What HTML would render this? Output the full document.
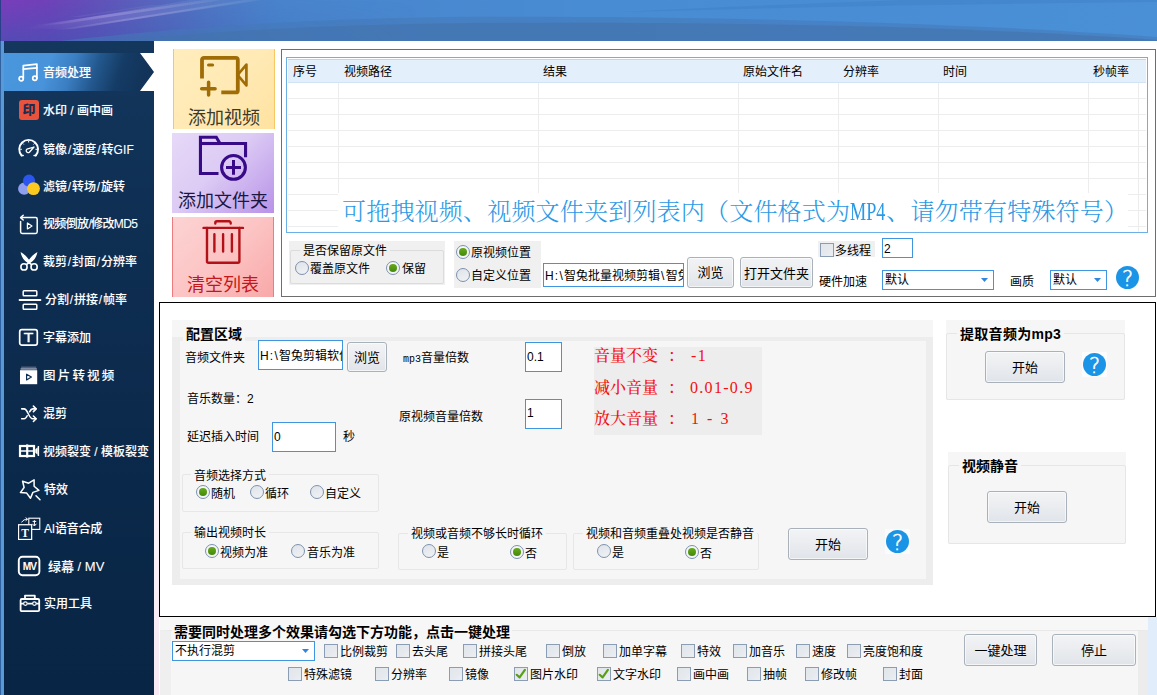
<!DOCTYPE html>
<html lang="zh-CN">
<head>
<meta charset="utf-8">
<title>智兔批量视频剪辑</title>
<style>
*{box-sizing:border-box;margin:0;padding:0}
html,body{width:1157px;height:695px;overflow:hidden;background:#fff}
body{position:relative;font-family:"Liberation Sans","Noto Sans CJK SC",sans-serif;font-size:12px;color:#000;line-height:14px}
.abs,#app *{position:absolute}
#app{position:absolute;left:0;top:0;width:1157px;height:695px;overflow:hidden}
#hdr{left:0;top:0;width:1157px;height:41px;background:linear-gradient(90deg,#6a3fb5 0%,#5a55b5 18%,#4a72b8 35%,#4380c0 55%,#4487c8 100%)}
#side{left:0;top:41px;width:154px;height:654px;background:linear-gradient(180deg,#14375d 0%,#0e2e52 30%,#0a2849 70%,#092545 100%)}
#sideL{left:0;top:41px;width:4px;height:654px;background:#5a99d6;border-left:1px solid #2f62a0}
.nav{left:4px;width:150px;height:38px;color:#fff;font-weight:bold;font-size:12px;line-height:38px;white-space:nowrap}
.nav span{left:39px;top:0}
.nav svg{left:14px;top:8px}
.t{white-space:nowrap;line-height:16px}
.sl{position:static!important;font-weight:inherit;margin:0 .8px}

#act{left:4px;top:53px;width:150px;height:38px;background:linear-gradient(108deg,#4a97de 0%,#4893da 30%,#3b7ec2 45%,#23588e 60%,#153c66 75%,#12345a 90%)}
#actw{left:140px;top:53px;width:14px;height:38px;background:#fff;clip-path:polygon(0 0,100% 0,100% 100%,0 100%,100% 50%)}
.nv{color:#fff;font-weight:500;font-size:12px;line-height:14px;white-space:nowrap;text-shadow:0 0 1px rgba(255,255,255,.25)}

.bb{width:102px;height:80px}
#b1{left:173px;top:49px;background:linear-gradient(135deg,#ffedbc 0%,#ffeab5 50%,#ffe2a0 100%);border-left:1px solid #f6c765;border-right:1px solid #f6c765}
#b2{left:172px;top:133px;background:linear-gradient(135deg,#e6d9f8 0%,#dccbf4 45%,#b892e8 100%)}
#b3{left:172px;top:217px;background:linear-gradient(135deg,#fdd3d3 0%,#fcc4c4 50%,#f9a8a8 100%);border-left:1px solid #ef7c7c;border-right:1px solid #ef7c7c}
.bt{font-size:18px;line-height:20px;text-align:center;white-space:nowrap}
#tp{left:281px;top:49px;width:875px;height:248px;border:1px solid #6e6e6e;background:#fff}
#lv{left:286px;top:57px;width:862px;height:176px;border:1px solid #6bb0e6;background:#fff}
#lvh{left:288px;top:59px;width:858px;height:24px;background:#e4effc;border-bottom:1px solid #d3e3f6;border-top:1px solid #b9d6f2}
#grid{left:288px;top:83px;width:858px;height:149px;
background-image:linear-gradient(#ededed,#ededed),linear-gradient(#ededed,#ededed),linear-gradient(#ededed,#ededed),linear-gradient(#ededed,#ededed),linear-gradient(#ededed,#ededed),linear-gradient(#ededed,#ededed),linear-gradient(#ededed,#ededed),repeating-linear-gradient(180deg,transparent 0,transparent 15px,#ededed 15px,#ededed 16px);
background-size:1px 100%,1px 100%,1px 100%,1px 100%,1px 100%,1px 100%,1px 100%,100% 16px;
background-position:50px 0,250px 0,450px 0,550px 0,650px 0,800px 0,850px 0,0 0;background-repeat:no-repeat,no-repeat,no-repeat,no-repeat,no-repeat,no-repeat,no-repeat,repeat-y}
#drag{left:338px;top:193px;width:790px;height:39px;background:#fff;font-family:"Liberation Serif","Noto Serif CJK SC",serif;font-weight:300;font-size:24px;line-height:38px;color:#2b9ae6;padding-left:4px;letter-spacing:.2px}
.mp4{position:static!important;display:inline-block;width:36px;font-size:26px;line-height:20px;font-weight:normal;transform:scaleX(.7);transform-origin:0 50%;letter-spacing:0}
.gb{background:#f0f0f0}
.gbl{border:1px solid #dcdcdc;border-radius:2px}
.gt{background:#f0f0f0}
.rd{width:14px;height:14px;border-radius:50%;border:1px solid #7c92ae;background:linear-gradient(160deg,#dfe4ea 0%,#e9ecf0 60%,#f1f3f5 100%)}
.rd.on{background:#f4f6f8}
.rd.on::after{content:"";position:absolute;left:2px;top:2px;width:8px;height:8px;border-radius:50%;background:linear-gradient(180deg,#66a81a 0%,#559a12 50%,#46860e 100%)}
.cb{width:14px;height:14px;border:1px solid #8a9db4;background:linear-gradient(135deg,#e1e6eb 0%,#e6eaee 60%,#eceff2 100%)}
.inp{border:1px solid #4095e0;background:#fff;white-space:nowrap;overflow:hidden;padding-left:1px}
.num{position:static!important;font-family:"Liberation Sans",sans-serif;font-size:12px}
.mono{position:static!important;font-family:"Liberation Mono",monospace;font-size:10px;letter-spacing:0}
.btn{border:1px solid #a9b1bb;border-radius:3px;background:linear-gradient(180deg,#f2f3f5 0%,#ebedf0 45%,#e0e4e9 100%);text-align:center;font-size:13px;white-space:nowrap;box-shadow:inset 0 0 0 1px rgba(255,255,255,.6)}
.arr{right:5px;top:7px;width:7px;height:4px;background:#2f86de;clip-path:polygon(0 0,100% 0,50% 100%)}
.help{width:23px;height:23px;border-radius:50%;background:#1a94e6;color:#fff;font-family:"DejaVu Sans Light","DejaVu Sans",sans-serif;font-weight:200;font-size:21px;line-height:26px;text-align:center;-webkit-text-stroke:.55px #fff;overflow:hidden}

#cp{left:159px;top:302px;width:997px;height:315px;border:1px solid #000;background:#fff}
#cg{left:172px;top:320px;width:761px;height:265px;background:#f6f6f6}
#cgi{left:172px;top:337px;width:761px;height:248px;border:8px solid #ededed;border-top-width:4px;border-bottom-width:6px;border-right-width:7px;background:#f6f6f6}
.bold14{font-weight:bold;font-size:14px;line-height:16px}
.redbg{left:594px;top:347px;width:168px;height:88px;background:#ededed}
.red{font-family:"Liberation Serif","Noto Serif CJK SC",serif;font-size:16px;line-height:20px;color:#f21010;font-weight:500}
.rn{letter-spacing:1.3px;word-spacing:1.5px}
.g2{border-color:#e7e7e7;background:#f6f6f6}
.gt2{background:#f6f6f6;padding:0 3px}
#bot{left:160px;top:617px;width:997px;height:78px;background:#f7f7f7}
#botg{left:160px;top:630px;width:988px;height:65px;background:#f6f6f6;border-top:1px solid #e8e8e8;border-left:11px solid #efefef;border-right:10px solid #ececec}
#pink{left:154px;top:400px;width:5px;height:295px;background:linear-gradient(180deg,rgba(250,236,247,0) 0%,#faeef7 60%,#f8e9f5 100%)}
#botr{left:1148px;top:617px;width:9px;height:78px;background:#e2edfc}
</style>
</head>
<body>
<div id="app">
<div id="hdr"><svg width="1157" height="41" viewBox="0 0 1157 41" style="left:0;top:0">
<defs>
<linearGradient id="hg" x1="0" y1="0" x2="1" y2="0"><stop offset="0" stop-color="#7a3dbb"/><stop offset=".04" stop-color="#7041b9"/><stop offset=".08" stop-color="#6350b9"/><stop offset=".13" stop-color="#5865bd"/><stop offset=".18" stop-color="#4f76c4"/><stop offset=".24" stop-color="#4984cc"/><stop offset=".5" stop-color="#488cd3"/><stop offset="1" stop-color="#4a90d6"/></linearGradient>
<linearGradient id="hv" x1="0" y1="0" x2="0" y2="1"><stop offset="0" stop-color="#3058b0" stop-opacity="0"/><stop offset="1" stop-color="#3058b0" stop-opacity=".5"/></linearGradient>
<linearGradient id="st" x1="0" y1="1" x2="1" y2="0"><stop offset="0" stop-color="#fff" stop-opacity="0"/><stop offset=".4" stop-color="#d8c8ff" stop-opacity=".28"/><stop offset="1" stop-color="#fff" stop-opacity=".05"/></linearGradient>
<linearGradient id="hmg" x1="0" y1="0" x2="1" y2="0"><stop offset="0" stop-color="#fff"/><stop offset="1" stop-color="#000"/></linearGradient><mask id="hm" maskUnits="userSpaceOnUse" x="0" y="0" width="420" height="41"><rect width="420" height="41" fill="url(#hmg)"/></mask>
</defs>
<rect width="1157" height="41" fill="url(#hg)"/>
<rect width="420" height="41" fill="url(#hv)" mask="url(#hm)"/>
<path d="M60 41C180 28 300 19 450 17C650 16 900 19 1157 37V41Z" fill="#4678b8" opacity=".55"/><path d="M110 41C230 30 330 25 470 23C680 22 930 24 1157 40V41Z" fill="#4373ac" opacity=".6"/>

<path d="M620 12C800 7 980 4 1157 2V0H900C800 4 700 8 620 12Z" fill="#3f7fc6" opacity=".45"/>
<path d="M20 29L190 0H255L75 29Z" fill="url(#st)" opacity=".55"/>
<path d="M30 26L205 0H222L62 24Z" fill="url(#st)"/>
<path d="M48 31L150 15L245 0H262L72 29Z" fill="url(#st)" opacity=".9"/>
<path d="M70 17L150 5L160 5L80 17Z" fill="#fff" opacity=".05"/>
<rect width="1" height="41" fill="#2a3f8a"/>
</svg></div>
<div id="side"></div>
<div id="sideL"></div>
<div id="act"></div>
<div id="actw"></div>
<!-- nav items -->
<div class="nv" style="top:66px;left:43px">音频处理</div>
<svg style="left:17px;top:61px" width="24" height="24" viewBox="0 0 24 24" fill="none" stroke="#fff" stroke-width="1.7" stroke-linejoin="round" stroke-linecap="round"><path d="M6.3 17.3V4.6l13.6-1.4v14"/><path d="M6.3 8.1l13.6-1.3"/><circle cx="4.2" cy="17.7" r="2.1"/><circle cx="17.8" cy="17.2" r="2.1"/></svg>

<div class="nv" style="top:104px;left:43px">水印 / 画中画</div>
<div style="left:19px;top:100px;width:20px;height:20px;border-radius:3px;background:#e9523c"></div>
<div class="t" style="left:22px;top:101px;width:14px;font-size:13px;line-height:18px;font-weight:900;color:#1b2b52;text-align:center">印</div>

<div class="nv" style="top:143px;left:43px;letter-spacing:.1px">镜像<b class="sl">/</b>速度<b class="sl">/</b>转GIF</div>
<svg style="left:17px;top:137px" width="24" height="24" viewBox="0 0 24 24" fill="none" stroke="#fff" stroke-width="1.900" stroke-linecap="round"><path d="M4.58 18.500A9.4 9.4 0 1 1 18.72 18.500"/><path d="M4.58 18.500h1.600M18.72 18.500h-1.600" stroke-width="1.600"/><path d="M3.15 12.30L4.85 12.30M5.64 6.29L6.84 7.49M11.65 3.80L11.65 5.50M17.66 6.29L16.46 7.49M20.15 12.30L18.45 12.30" stroke-width="1" stroke-linecap="butt"/><path d="M17 10L9.900 12.200A1.900 1.900 0 1 0 12.400 15.200Z" stroke-width="1.300" stroke-linejoin="round"/></svg>

<div class="nv" style="top:180px;left:43px">滤镜<b class="sl">/</b>转场<b class="sl">/</b>旋转</div>
<svg style="left:17px;top:173px" width="24" height="24" viewBox="0 0 24 24"><circle cx="7.200" cy="15.700" r="6.100" fill="#8f9ff0"/><circle cx="12" cy="7.700" r="6.100" fill="#2b56f0"/><circle cx="16.500" cy="15.600" r="6.400" fill="#fcc91f"/></svg>

<div class="nv" style="top:217px;left:43px;letter-spacing:-.65px">视频倒放/修改MD5</div>
<svg style="left:17px;top:211.500px" width="24" height="24" viewBox="0 0 24 24" fill="none" stroke="#fff" stroke-width="1.500" stroke-linecap="round" stroke-linejoin="round"><path d="M5 5.600h13.600a1.600 1.600 0 0 1 1.600 1.600v12.600a1.600 1.600 0 0 1-1.600 1.600H5.200a1.600 1.600 0 0 1-1.600-1.600V9.500"/><path d="M6.200 3.200L3.600 5.600l2.600 2.400"/><path d="M10.400 11v6l4.600-3z" stroke-width="1.200"/></svg>

<div class="nv" style="top:255px;left:43px;">裁剪<b class="sl">/</b>封面<b class="sl">/</b>分辨率</div>
<svg style="left:17px;top:249px" width="24" height="24" viewBox="0 0 24 24" fill="none" stroke="#fff" stroke-width="1.600"><circle cx="7" cy="17.900" r="3.100"/><circle cx="17.100" cy="17.900" r="3.100"/><path d="M3.600 3c.6 4.400 3 8.400 6.800 10.700l1.600 1.200 1.600-1.200c3.800-2.300 6.200-6.300 6.800-10.700-3 1.600-6.300 4.600-8.400 7.800-2.100-3.200-5.400-6.200-8.400-7.800z" fill="#fff" stroke="none"/><path d="M12 13.600l-2.600 2M12 13.600l2.600 2" stroke-width="1.800"/></svg>

<div class="nv" style="top:293px;left:45px;">分割<b class="sl">/</b>拼接<b class="sl">/</b>帧率</div>
<svg style="left:18px;top:288px" width="24" height="24" viewBox="0 0 24 24" fill="none" stroke="#fff" stroke-width="1.500"><rect x="5.200" y="2.800" width="13.600" height="5" rx=".8"/><rect x="5.200" y="16.200" width="13.600" height="5" rx=".8"/><path d="M1.600 12h20.800" stroke-linecap="round" stroke-width="2"/></svg>

<div class="nv" style="top:331px;left:43px">字幕添加</div>
<svg style="left:17px;top:326px" width="24" height="24" viewBox="0 0 24 24" fill="none" stroke="#fff" stroke-width="1.500" stroke-linecap="round"><rect x="2.700" y="3.700" width="17.600" height="15.400" rx="2.200" stroke-width="1.700"/><text x="11.500" y="16" font-family="Liberation Sans,sans-serif" font-size="12.500" fill="#fff" stroke="#fff" stroke-width=".35" text-anchor="middle" transform="translate(11.500 0) scale(1.250 1) translate(-11.500 0)">T</text></svg>

<div class="nv" style="top:369px;left:43px;letter-spacing:2.200px;font-size:12.500px">图片转视频</div>
<svg style="left:17px;top:364px" width="24" height="24" viewBox="0 0 24 24"><rect x="4.200" y="2.600" width="15" height="1.200" fill="#5f6f86"/><rect x="3.600" y="4.200" width="16.200" height="1.500" fill="#98a4b6"/><rect x="3" y="6.200" width="17.200" height="14" fill="#fff"/><path d="M9.600 10.200v5.800l4.800-2.900z" fill="none" stroke="#0d2f54" stroke-width="1.200" stroke-linejoin="round"/></svg>

<div class="nv" style="top:407px;left:43px">混剪</div>
<svg style="left:18px;top:403px" width="22" height="22" viewBox="0 0 24 24" fill="none" stroke="#fff" stroke-width="1.700" stroke-linecap="round" stroke-linejoin="round"><path d="M4 6.400h2.600c4.200 0 5 10.800 9.400 10.800h3.600"/><path d="M4 17.200h2.600c1.600 0 2.600-1.500 3.400-3.300M12.600 9.600c.9-1.800 1.900-3.200 3.600-3.200h3.400"/><path d="M16.800 3.400l3 3-3 3M16.800 14.200l3 3-3 3"/></svg>

<div class="nv" style="top:445px;left:43px;">视频裂变 / 模板裂变</div>
<svg style="left:17px;top:439px" width="24" height="24" viewBox="0 0 24 24" fill="none" stroke="#fff"><rect x="3" y="7" width="14" height="10" stroke-width="2.200"/><path d="M10.200 5.400v13.200" stroke-width="2.200"/><path d="M3 12h14" stroke-width="1.500"/><path d="M18.300 10.200l2.400-1.900v7.400l-2.400-1.900z" fill="#fff" stroke="none"/><path d="M21.400 7v10" stroke-width="1.400"/></svg>

<div class="nv" style="top:483px;left:44px">特效</div>
<svg style="left:17px;top:476px" width="26" height="26" viewBox="0 0 26 26" fill="none" stroke="#fff" stroke-width="1.500" stroke-linejoin="round" stroke-linecap="round"><path d="M17.1 3.9L17.1 10.3L21.9 14.4L15.9 16.4L13.5 22.2L9.7 17.1L3.4 16.6L7.1 11.5L5.6 5.3L11.7 7.2Z"/><path d="M19 19.800l4 4"/></svg>

<div class="nv" style="top:522px;left:44px;letter-spacing:-.2px">AI语音合成</div>
<svg style="left:17px;top:516px" width="26" height="26" viewBox="0 0 26 26" fill="none" stroke="#fff" stroke-width="1.100"><rect x="1.600" y="8.800" width="13" height="14.600" fill="#0b2a4d"/><rect x="11.800" y="2.200" width="11" height="11.200"/><rect x="1.600" y="8.800" width="13" height="14.600" fill="#0b2a4d"/><text x="8.100" y="20.800" font-family="Liberation Serif,serif" font-weight="bold" font-size="11.500" fill="#fff" stroke="none" text-anchor="middle">T</text><path d="M17.400 4.200v5.600M15.400 7.800l2 2.200 2-2.200M15.600 5.400h3.600" stroke-width="1"/><path d="M4.600 6.400c1.400-2.400 3.600-3.200 5.800-3.200M8.600 1.600l2 1.600-2 1.600" stroke-width="1"/></svg>

<div class="nv" style="top:560px;left:48px;font-size:13px">绿幕 / MV</div>
<svg style="left:17px;top:554px" width="26" height="26" viewBox="0 0 26 26" fill="none" stroke="#fff" stroke-width="1.900" stroke-linejoin="round" stroke-linecap="round"><rect x="1.800" y="2.800" width="20.600" height="18.400" rx="3.600"/><text x="12.500" y="15.700" font-family="Liberation Sans,sans-serif" font-weight="bold" font-size="10.200" fill="#fff" stroke="none" text-anchor="middle" letter-spacing="-1">MV</text></svg>

<div class="nv" style="top:597px;left:44px">实用工具</div>
<svg style="left:17px;top:592px" width="26" height="26" viewBox="0 0 26 26" fill="none" stroke="#fff" stroke-width="1.800" stroke-linejoin="round"><rect x="3.600" y="7" width="18.600" height="12.200" rx="1.200"/><path d="M8 7V3.600h9.800V7M3.600 11.600h3M10.400 11.600h5M19.200 11.600h3"/><circle cx="8.400" cy="11.600" r="1.800" stroke-width="1.200"/><circle cx="17.400" cy="11.600" r="1.800" stroke-width="1.200"/></svg>


<!-- big buttons -->
<div id="b1" class="bb"></div>
<svg style="left:198px;top:51px" width="52" height="50" viewBox="0 0 52 50" fill="none" stroke="#a06c06" stroke-width="3.800" stroke-linejoin="round"><path d="M4 27.600V8.800a2 2 0 0 1 2-2H37.800a2 2 0 0 1 2 2V39.400a2 2 0 0 1-2 2H23.300"/><path d="M48.400 13.600L39.600 24L48.400 34.400Z" stroke-width="2.700" stroke-linejoin="round"/><path d="M10.500 13.900H14.600" stroke-width="3" stroke-linecap="round"/><path d="M3.700 37.800H17.100M10.600 31.300V43.900" stroke-width="3.500" stroke-linecap="round"/></svg>
<div class="bt" style="left:173px;top:108px;width:102px;color:#3b3a2c">添加视频</div>
<div id="b2" class="bb"></div>
<svg style="left:197px;top:134px" width="54" height="50" viewBox="0 0 54 50" fill="none" stroke="#380a88" stroke-width="3.100" stroke-linejoin="miter"><path d="M21.500 39.550H3.450V3.300H19.300L23 9.500H48.550V23.300"/><path d="M3.450 9.500H23"/><circle cx="36.500" cy="33.400" r="11.900"/><path d="M29 33.400H44M36.500 26.100V40.700" stroke-width="3"/></svg>
<div class="bt" style="left:172px;top:191px;width:102px;color:#1b1740">添加文件夹</div>
<div id="b3" class="bb"></div>
<svg style="left:199px;top:218px" width="48" height="48" viewBox="0 0 48 48" fill="none" stroke="#b21217" stroke-width="2.400" stroke-linecap="round" stroke-linejoin="round"><path d="M4.500 9.900H44"/><path d="M16.300 5.500V4.900a1.600 1.600 0 0 1 1.600-1.600H30.100a1.600 1.600 0 0 1 1.600 1.600V5.500"/><path d="M8 9.900V43.200a1.500 1.500 0 0 0 1.500 1.500H38.900a1.500 1.500 0 0 0 1.500-1.500V9.900"/><path d="M15.400 16.200V33.600M24.100 16.200V33.600M32.900 16.200V33.600"/></svg>
<div class="bt" style="left:172px;top:275px;width:102px;color:#c3171c">清空列表</div>

<!-- top panel -->
<div id="tp"></div>
<div id="lv"></div>
<div id="lvh"></div>
<div id="grid"></div>
<div class="t" style="left:293px;top:64px">序号</div>
<div class="t" style="left:344px;top:64px">视频路径</div>
<div class="t" style="left:543px;top:64px">结果</div>
<div class="t" style="left:743px;top:64px">原始文件名</div>
<div class="t" style="left:843px;top:64px">分辨率</div>
<div class="t" style="left:943px;top:64px">时间</div>
<div class="t" style="left:1093px;top:64px">秒帧率</div>
<div id="drag" class="t">可拖拽视频、视频文件夹到列表内（文件格式为<b class="mp4">MP4</b>、请勿带有特殊符号）</div>

<div class="gb" style="left:289px;top:241px;width:156px;height:44px"></div>
<div class="gbl" style="left:290px;top:250px;width:154px;height:34px"></div>
<div class="t gt" style="left:300px;top:243px;padding:0 3px">是否保留原文件</div>
<div class="rd" style="left:295px;top:261px"></div><div class="t" style="left:310px;top:261px">覆盖原文件</div>
<div class="rd on" style="left:386px;top:261px"></div><div class="t" style="left:402px;top:261px">保留</div>

<div class="gb" style="left:454px;top:241px;width:87px;height:47px"></div>
<div class="rd on" style="left:456px;top:245px"></div><div class="t" style="left:471px;top:245px">原视频位置</div>
<div class="rd" style="left:456px;top:268px"></div><div class="t" style="left:471px;top:268px">自定义位置</div>

<div class="inp" style="left:543px;top:263px;width:141px;height:24px;line-height:24px"><span class="num" style="letter-spacing:1.2px">H:\</span>智兔批量视频剪辑<span class="num" style="letter-spacing:1.5px;margin-left:1px">\</span>智兔</div>
<div class="btn" style="left:687px;top:257px;width:47px;height:31px;line-height:30px">浏览</div>
<div class="btn" style="left:740px;top:257px;width:73px;height:31px;line-height:31px">打开文件夹</div>

<div class="gb" style="left:818px;top:241px;width:57px;height:16px"></div>
<div class="cb" style="left:820px;top:243px"></div><div class="t" style="left:835px;top:243px">多线程</div>
<div class="inp" style="left:882px;top:238px;width:31px;height:20px;line-height:21px;padding-left:1px"><span class="num">2</span></div>
<div class="t" style="left:819px;top:274px">硬件加速</div>
<div class="inp" style="left:882px;top:270px;width:112px;height:20px;line-height:19px;padding-left:2px">默认<i class="arr"></i></div>
<div class="t" style="left:1010px;top:274px">画质</div>
<div class="inp" style="left:1050px;top:270px;width:57px;height:20px;line-height:19px;padding-left:2px">默认<i class="arr"></i></div>
<div class="help" style="left:1116px;top:266px">?</div>

<!-- config panel -->
<div id="cp"></div>
<div id="cg"></div>
<div id="cgi"></div>
<div class="t bold14" style="left:183px;top:326px;padding:0 3px;background:#f6f6f6">配置区域</div>
<div class="t" style="left:185px;top:350px">音频文件夹</div>
<div class="inp" style="left:258px;top:340px;width:85px;height:30px;line-height:31px"><span class="num" style="letter-spacing:1.2px">H:\</span>智兔剪辑软件</div>
<div class="btn" style="left:347px;top:342px;width:40px;height:30px;line-height:30px">浏览</div>
<div class="t" style="left:403px;top:350px"><span class="mono">mp3</span>音量倍数</div>
<div class="inp" style="left:525px;top:342px;width:37px;height:30px;line-height:28px"><span class="num">0.1</span></div>
<div class="t" style="left:187px;top:391px">音乐数量：<span class="num">2</span></div>
<div class="t" style="left:399px;top:409px">原视频音量倍数</div>
<div class="inp" style="left:525px;top:399px;width:37px;height:30px;line-height:26px"><span class="num">1</span></div>
<div class="t" style="left:187px;top:429px">延迟插入时间</div>
<div class="inp" style="left:272px;top:422px;width:64px;height:30px;line-height:28px"><span class="num">0</span></div>
<div class="t" style="left:343px;top:429px">秒</div>

<div class="redbg"></div>
<div class="t red" style="left:594px;top:346px">音量不变</div><div class="t red" style="left:668px;top:346px">：</div><div class="t red rn" style="left:691px;top:346px">-1</div>
<div class="t red" style="left:594px;top:378px">减小音量</div><div class="t red" style="left:668px;top:378px">：</div><div class="t red rn" style="left:690px;top:378px">0.01-0.9</div>
<div class="t red" style="left:594px;top:409px">放大音量</div><div class="t red" style="left:668px;top:409px">：</div><div class="t red rn" style="left:691px;top:409px">1 - 3</div>

<div class="gbl g2" style="left:182px;top:474px;width:197px;height:38px"></div>
<div class="t gt2" style="left:191px;top:468px">音频选择方式</div>
<div class="rd on" style="left:196px;top:485px"></div><div class="t" style="left:211px;top:486px">随机</div>
<div class="rd" style="left:250px;top:485px"></div><div class="t" style="left:265px;top:486px">循环</div>
<div class="rd" style="left:310px;top:485px"></div><div class="t" style="left:325px;top:486px">自定义</div>

<div class="gbl g2" style="left:182px;top:532px;width:197px;height:37px"></div>
<div class="t gt2" style="left:191px;top:525px">输出视频时长</div>
<div class="rd on" style="left:205px;top:544px"></div><div class="t" style="left:220px;top:545px">视频为准</div>
<div class="rd" style="left:291px;top:544px"></div><div class="t" style="left:307px;top:545px">音乐为准</div>

<div class="gbl g2" style="left:398px;top:533px;width:169px;height:37px"></div>
<div class="t gt2" style="left:408px;top:526px">视频或音频不够长时循环</div>
<div class="rd" style="left:422px;top:544px"></div><div class="t" style="left:437px;top:545px">是</div>
<div class="rd on" style="left:510px;top:545px"></div><div class="t" style="left:525px;top:546px">否</div>

<div class="gbl g2" style="left:573px;top:533px;width:186px;height:37px"></div>
<div class="t gt2" style="left:583px;top:526px">视频和音频重叠处视频是否静音</div>
<div class="rd" style="left:597px;top:544px"></div><div class="t" style="left:612px;top:545px">是</div>
<div class="rd on" style="left:685px;top:545px"></div><div class="t" style="left:700px;top:546px">否</div>

<div class="btn" style="left:788px;top:528px;width:80px;height:32px;line-height:32px">开始</div>
<div style="left:885px;top:529px;width:25px;height:25px;background:#fbfbfb"></div><div class="help" style="left:886px;top:530px">?</div>

<div class="gb" style="left:946px;top:320px;width:179px;height:80px;background:#f6f6f6"></div>
<div class="gbl" style="left:946px;top:333px;width:179px;height:67px;border-color:#e6e6e6"></div>
<div class="t bold14" style="left:957px;top:326px;padding:0 3px;background:#f6f6f6;letter-spacing:.3px">提取音频为mp3</div>
<div class="btn" style="left:985px;top:351px;width:80px;height:32px;line-height:32px">开始</div>
<div style="left:1082px;top:352px;width:25px;height:25px;background:#fcfcfc"></div><div class="help" style="left:1083px;top:353px">?</div>

<div class="gb" style="left:948px;top:452px;width:178px;height:92px;background:#f6f6f6"></div>
<div class="gbl" style="left:948px;top:465px;width:178px;height:79px;border-color:#e6e6e6"></div>
<div class="t bold14" style="left:959px;top:458px;padding:0 3px;background:#f6f6f6">视频静音</div>
<div class="btn" style="left:987px;top:491px;width:80px;height:32px;line-height:32px">开始</div>

<!-- bottom -->
<div id="pink"></div>
<div id="bot"></div>
<div id="botg"></div>
<div id="botr"></div>
<div class="t bold14" style="left:172px;top:624px;padding:0 2px;background:#f7f7f7">需要同时处理多个效果请勾选下方功能，点击一键处理</div>
<div class="inp" style="left:172px;top:641px;width:143px;height:20px;line-height:19px;padding-left:2px">不执行混剪<i class="arr"></i></div>
<div class="cb" style="left:324px;top:644px"></div><div class="t" style="left:340px;top:644px">比例裁剪</div>
<div class="cb" style="left:396px;top:644px"></div><div class="t" style="left:412px;top:644px">去头尾</div>
<div class="cb" style="left:463px;top:644px"></div><div class="t" style="left:479px;top:644px">拼接头尾</div>
<div class="cb" style="left:546px;top:644px"></div><div class="t" style="left:562px;top:644px">倒放</div>
<div class="cb" style="left:603px;top:644px"></div><div class="t" style="left:619px;top:644px">加单字幕</div>
<div class="cb" style="left:681px;top:644px"></div><div class="t" style="left:697px;top:644px">特效</div>
<div class="cb" style="left:733px;top:644px"></div><div class="t" style="left:749px;top:644px">加音乐</div>
<div class="cb" style="left:796px;top:644px"></div><div class="t" style="left:812px;top:644px">速度</div>
<div class="cb" style="left:847px;top:644px"></div><div class="t" style="left:863px;top:644px">亮度饱和度</div>
<div class="cb" style="left:288px;top:667px"></div><div class="t" style="left:304px;top:667px">特殊滤镜</div>
<div class="cb" style="left:375px;top:667px"></div><div class="t" style="left:391px;top:667px">分辨率</div>
<div class="cb" style="left:449px;top:667px"></div><div class="t" style="left:465px;top:667px">镜像</div>
<div class="cb ck" style="left:514px;top:667px"><svg style="left:-1px;top:-1px" width="14" height="14" viewBox="0 0 14 14" fill="none" stroke="#5a9e14" stroke-width="2.200" stroke-linecap="round" stroke-linejoin="round"><path d="M2.700 7.800L5.600 10.400L10.900 2.900"/></svg></div><div class="t" style="left:530px;top:667px">图片水印</div>
<div class="cb ck" style="left:597px;top:667px"><svg style="left:-1px;top:-1px" width="14" height="14" viewBox="0 0 14 14" fill="none" stroke="#5a9e14" stroke-width="2.200" stroke-linecap="round" stroke-linejoin="round"><path d="M2.700 7.800L5.600 10.400L10.900 2.900"/></svg></div><div class="t" style="left:613px;top:667px">文字水印</div>
<div class="cb" style="left:677px;top:667px"></div><div class="t" style="left:693px;top:667px">画中画</div>
<div class="cb" style="left:747px;top:667px"></div><div class="t" style="left:763px;top:667px">抽帧</div>
<div class="cb" style="left:805px;top:667px"></div><div class="t" style="left:821px;top:667px">修改帧</div>
<div class="cb" style="left:883px;top:667px"></div><div class="t" style="left:899px;top:667px">封面</div>
<div class="btn" style="left:964px;top:634px;width:73px;height:32px;line-height:32px">一键处理</div>
<div class="btn" style="left:1052px;top:634px;width:84px;height:32px;line-height:32px">停止</div>
</div>
</body>
</html>
